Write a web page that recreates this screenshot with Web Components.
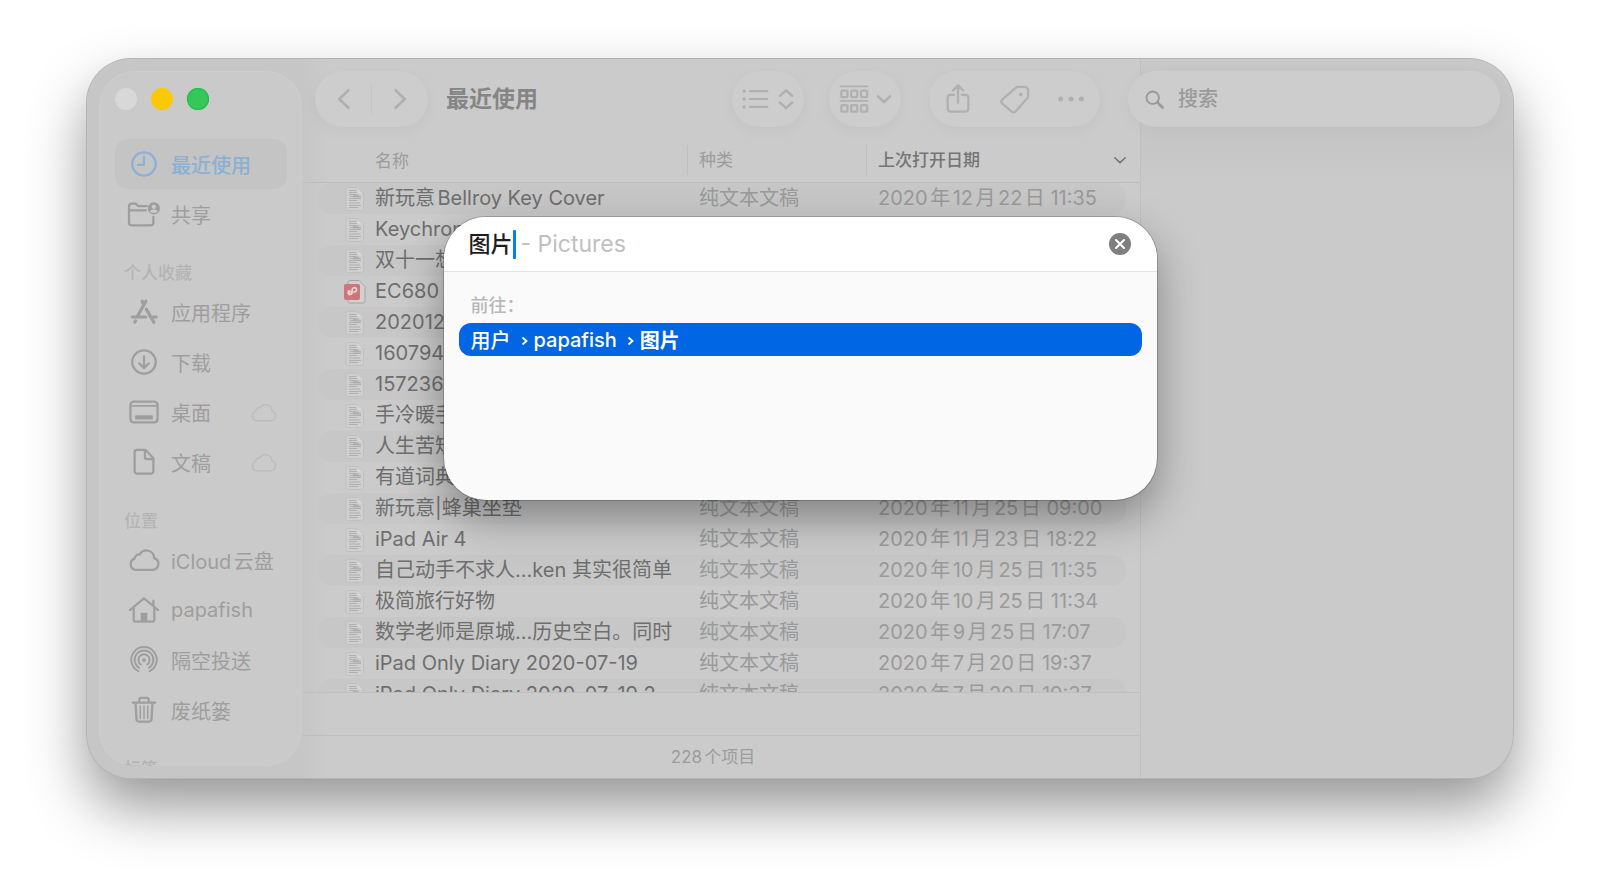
<!DOCTYPE html>
<html lang="zh-CN">
<head>
<meta charset="utf-8">
<title>最近使用</title>
<style>
  html, body { height: 100%; margin: 0; }
  body {
    box-sizing: border-box;
    padding: 59px 87px 115px 87px;
    background: #fff;
    font-family: Inter, "Noto Sans CJK SC", sans-serif;
    font-size: 20px;
    color: #707070;
    overflow: hidden;
    text-autospace: normal;
  }
</style>
</head>
<body>
<finder-window>
  <finder-sidebar slot="sidebar">
    <side-item icon="clock" selected>最近使用</side-item>
    <side-item icon="shared">共享</side-item>
    <side-heading>个人收藏</side-heading>
    <side-item icon="apps">应用程序</side-item>
    <side-item icon="download">下载</side-item>
    <side-item icon="desktop" cloud>桌面</side-item>
    <side-item icon="doc" cloud>文稿</side-item>
    <side-heading>位置</side-heading>
    <side-item icon="cloud">iCloud云盘</side-item>
    <side-item icon="home">papafish</side-item>
    <side-item icon="airdrop">隔空投送</side-item>
    <side-item icon="trash">废纸篓</side-item>
    <side-heading>标签</side-heading>
  </finder-sidebar>
  <finder-toolbar slot="toolbar">最近使用</finder-toolbar>
  <file-list slot="list"></file-list>
  <goto-sheet slot="sheet"></goto-sheet>
</finder-window>

<script>
const ICONS = {
  clock: '<circle cx="16" cy="16" r="12.500"/><path d="M16 8v9H9.500"/>',
  shared: '<path d="M26 19v6a3 3 0 0 1-3 3H3a3 3 0 0 1-3-3V8a3 3 0 0 1 3-3h4l3 2.500h9M1 12h17"/><path fill="currentColor" stroke="none" fill-rule="evenodd" d="M26.500 3.500a6.500 6.500 0 1 1 0 13 6.500 6.500 0 0 1 0-13zm0 2.500a2.300 2.300 0 1 0 0 4.600 2.300 2.300 0 0 0 0-4.600zm-4 7.200c1 1.200 2.400 1.500 4 1.500s3-.3 4-1.500c-.6-1.200-2-1.900-4-1.900s-3.400.7-4 1.900z"/>',
  apps: '<g stroke-width="3.400"><path d="M18 4.500 9 20.500M14 4.500 16 8.500M18.500 13l8 14M3.500 21.300h14.500M23 21.300h6M7 25.500l-.7 1.200"/></g>',
  download: '<circle cx="16" cy="16" r="12.500"/><path d="M16 10v12M11 17.500l5 5 5-5"/>',
  desktop: '<rect x="1.500" y="5" width="29" height="22" rx="3.500"/><path d="M2 9.500h28" stroke-width="1.800"/><rect x="6.500" y="19.500" width="19" height="4.500" rx="1" fill="currentColor" stroke="none"/>',
  doc: '<path d="M8.500 3h9l8.500 9V26a2.500 2.500 0 0 1-2.500 2.500h-15A2.500 2.500 0 0 1 6 26V5.500A2.500 2.500 0 0 1 8.500 3zM17 3.500V11a2 2 0 0 0 2 2h7"/>',
  cloud: '<path d="M7 26.500a6.200 6.200 0 0 1-1-12 5.200 5.200 0 0 1 5.500-4.500 8.200 8.200 0 0 1 15.300 4A6.400 6.400 0 0 1 25.500 26.500z"/>',
  home: '<path d="M1 16 16 3.500 31 16M5 14v12.500a2 2 0 0 0 2 2h18a2 2 0 0 0 2-2V14M26 10.500V6"/><rect x="12.500" y="19" width="7" height="9" fill="currentColor" stroke="none"/>',
  airdrop: '<g stroke-width="2"><circle cx="16" cy="16" r="2" fill="currentColor" stroke="none"/><path d="M10 28a13.600 13.600 0 1 1 12 0M10.600 24.300a10 10 0 1 1 10.800 0M12.500 20.800a6 6 0 1 1 7 0"/></g>',
  trash: '<path d="M4 8h24M11 8V5a2 2 0 0 1 2-2h6a2 2 0 0 1 2 2v3M7 8l1 18a2.500 2.500 0 0 0 2.500 2.500h11A2.500 2.500 0 0 0 24 26l1-18"/><path d="M12 12v13M16 12v13M20 12v13" stroke-width="1.600"/>',
  back: '<path d="M21 6 10.500 16 21 26"/>',
  forward: '<path d="M11 6l10.500 10L11 26"/>',
  share: '<path d="M12 11.500H8a3 3 0 0 0-3 3v12a3 3 0 0 0 3 3h16a3 3 0 0 0 3-3v-12a3 3 0 0 0-3-3h-4M16 20V2M10.500 7 16 1.500 21.500 7"/>',
  tag: '<path d="M18 3h8a4 4 0 0 1 4 4v7L16.500 29.500q-2 1.500-4 0L2 20.500q-1.300-1.500 0-3.500z"/><circle cx="22" cy="11" r="2" fill="currentColor" stroke="none"/>',
  more: '<g fill="currentColor" stroke="none"><circle cx="4" cy="16" r="2.700"/><circle cx="15" cy="16" r="2.700"/><circle cx="26" cy="16" r="2.700"/></g>',
  list: '<path d="M9 7h20M9 16h20M9 25h20"/><g fill="currentColor" stroke="none"><circle cx="2.500" cy="7" r="1.900"/><circle cx="2.500" cy="16" r="1.900"/><circle cx="2.500" cy="25" r="1.900"/></g>',
  updown: '<path d="M9 12.500 16 6l7 6.500M9 20l7 6.500 7-6.500" stroke-width="2.800"/>',
  group: '<path d="M1.500 2.500h29M1.500 18h29" stroke-width="1.800"/><rect x="2.500" y="7" width="6.500" height="7" rx="1"/><rect x="13" y="7" width="6.500" height="7" rx="1"/><rect x="23.500" y="7" width="6.500" height="7" rx="1"/><rect x="2.500" y="22.500" width="6.500" height="7" rx="1"/><rect x="13" y="22.500" width="6.500" height="7" rx="1"/><rect x="23.500" y="22.500" width="6.500" height="7" rx="1"/>',
  chevron: '<path d="M2 10 16 23l14-13"/>',
  search: '<circle cx="13" cy="13" r="10.500"/><path d="m21 21 8.500 8.500" stroke-width="4.500"/>',
};

const make = (name, html) => customElements.define(name, class extends HTMLElement {
  connectedCallback() {
    if (this.shadowRoot) return;
    const t = document.createElement('template');
    t.innerHTML = typeof html === 'function' ? html(this) : html;
    this.attachShadow({ mode: 'open' }).append(t.content.cloneNode(true));
  }
});

make('ui-icon', el => `
  <style>
    :host { display: block; flex: none; width: 30px; height: 30px; }
    svg { display: block; width: 100%; height: 100%; fill: none; stroke: currentColor;
          stroke-width: var(--stroke, 2.4); stroke-linecap: round; stroke-linejoin: round; overflow: visible; }
  </style>
  <svg viewBox="0 0 32 32" aria-hidden="true">${ICONS[el.getAttribute('name')]}</svg>`);

make('finder-window', `
  <style>
    :host {
      display: grid; position: relative; height: 100%; box-sizing: border-box;
      grid-template: 74px minmax(0, 1fr) / 215px minmax(0, 1fr) 373px;
      background: #cbcbcb; border-radius: 44px;
      box-shadow: 0 0 0 1px #b4b4b4, 0 29px 58px rgba(0,0,0,.42);
    }
    .side { grid-area: 1 / 1 / 3 / 2; min-height: 0; padding: 12px 0 12px 12px; background: #c6c6c6;
            border-radius: 44px 0 0 44px; }
    .preview { grid-area: 1 / 3 / 3 / 4; background: linear-gradient(#c8c8c8, #c6c6c6 90px, #cacaca 130px); border-left: 1px solid #c0c0c0;
               border-radius: 0 44px 44px 0; }
    .bar { grid-area: 1 / 2 / 2 / 4; z-index: 1; }
    .back { grid-area: 1 / 2 / 3 / 3; background: linear-gradient(90deg, #c6c6c6, #cbcbcb 30px); }
    .main { grid-area: 2 / 2 / 3 / 3; min-height: 0; }
    .sheet { position: absolute; top: 158px; left: 0; right: 0; margin: 0 auto; width: 50%; z-index: 2; }
  </style>
  <div class="side"><slot name="sidebar"></slot></div>
  <div class="back"></div>
  <div class="preview"></div>
  <div class="bar"><slot name="toolbar"></slot></div>
  <div class="main"><slot name="list"></slot></div>
  <div class="sheet"><slot name="sheet"></slot></div>`);

make('finder-sidebar', `
  <style>
    :host { display: flex; flex-direction: column; height: 100%; box-sizing: border-box; overflow: hidden;
            padding: 17px 15px 0 16px; border-radius: 36px; background: #cacaca;
            box-shadow: inset 0 0 0 1px #cdcdcd; }
    .lights { display: flex; flex: none; gap: 14px; height: 51px; }
    button { width: 22px; height: 22px; padding: 0; border: 0; border-radius: 50%; background: #d8d8d8; }
    .min { background: #fbc804; }
    .max { background: #34c759; box-shadow: inset 0 0 0 1px #1fbf45; }
    nav { flex: 1; min-height: 0; }
  </style>
  <div class="lights">
    <button aria-label="关闭"></button><button class="min" aria-label="最小化"></button><button class="max" aria-label="缩放"></button>
  </div>
  <nav><slot></slot></nav>`);

make('side-item', el => `
  <style>
    :host { display: block; color: #9e9e9e; }
    a { display: flex; align-items: center; gap: 12px; height: 50px; padding: 0 11px 0 14px; border-radius: 13px;
        color: inherit; text-decoration: none; white-space: nowrap; }
    :host([selected]) a { background: #c4c4c4; color: #8bb0d4; font-weight: 500; }
    .cloud { width: 25px; height: 25px; margin-left: auto; color: #bcbcbc; --stroke: 1.8; }
  </style>
  <a href="#"><ui-icon name="${el.getAttribute('icon')}"></ui-icon><slot></slot>${
    el.hasAttribute('cloud') ? '<ui-icon class="cloud" name="cloud"></ui-icon>' : ''}</a>`);

make('side-heading', `
  <style>
    :host { display: block; box-sizing: border-box; height: 48px; padding: 20px 9px 0; line-height: 28px;
            font-size: 17px; font-weight: 500; color: #b4b4b4; }
  </style><slot></slot>`);

make('finder-toolbar', `
  <style>
    :host { display: flex; align-items: center; height: 56px; padding: 12px 13px 0; color: #b0b0b0; }
    .pill { display: flex; align-items: center; box-sizing: border-box; height: 56px; border-radius: 28px;
            background: #cdcdcd; box-shadow: 0 4px 16px rgba(0,0,0,.04); }
    button { display: flex; align-items: center; justify-content: center; flex: 1; height: 100%; padding: 0;
             border: 0; background: none; color: inherit; gap: 8px; }
    .nav { width: 113px; padding: 0 1px; --stroke: 3; }
    .nav i { width: 1px; height: 30px; background: #c4c4c4; }
    .nav ui-icon { width: 28px; height: 28px; }
    h1 { margin: 0 auto 0 18px; font-size: 23px; line-height: 32px; font-weight: 700; color: #858585; white-space: nowrap; }
    .views { display: flex; gap: 25px; margin-right: 28px; }
    .views .pill { width: 72px; }
    .lines { width: 28px; height: 28px; }
    .updown { width: 28px; height: 28px; margin: 0 -6px; }
    .drop { width: 14px; height: 14px; --stroke: 6; }
    .actions { width: 171px; margin-right: 28px; }
    .search { width: 372px; padding: 0 17px; gap: 14px; color: #9a9a9a; }
    .lens { width: 19px; height: 19px; --stroke: 3.2; }
    input { flex: 1; min-width: 0; padding: 0; border: 0; outline: 0; background: none; font: inherit; font-weight: 500; color: inherit; }
    input::placeholder { color: #9a9a9a; opacity: 1; }
  </style>
  <div class="pill nav">
    <button aria-label="后退"><ui-icon name="back"></ui-icon></button><i></i>
    <button aria-label="前进"><ui-icon name="forward"></ui-icon></button>
  </div>
  <h1><slot></slot></h1>
  <div class="views">
    <div class="pill"><button aria-label="显示"><ui-icon class="lines" name="list"></ui-icon><ui-icon class="updown" name="updown"></ui-icon></button></div>
    <div class="pill"><button aria-label="群组"><ui-icon name="group"></ui-icon><ui-icon class="drop" name="chevron"></ui-icon></button></div>
  </div>
  <div class="pill actions">
    <button aria-label="共享"><ui-icon name="share"></ui-icon></button>
    <button aria-label="标签"><ui-icon name="tag"></ui-icon></button>
    <button aria-label="更多"><ui-icon name="more"></ui-icon></button>
  </div>
  <label class="pill search"><ui-icon class="lens" name="search"></ui-icon><input type="text" placeholder="搜索" aria-label="搜索"></label>`);

make('file-icon', el => `
  <style>
    :host { display: block; flex: none; width: 22px; height: 26px; }
    svg { display: block; overflow: visible; }
  </style>` + (el.hasAttribute('pdf') ? `
  <svg width="22" height="26" viewBox="0 0 22 26" aria-hidden="true">
    <path d="M6 1.500h9l6 6V22a2 2 0 0 1-2 2H6a2 2 0 0 1-2-2V3.500a2 2 0 0 1 2-2z" fill="#d0d0d0" stroke="#a4a4a4"/>
    <rect x="0" y="5" width="16" height="16" rx="2" fill="#cf7478"/>
    <path d="M5.500 16.500V13h4.800a2.200 2.200 0 1 0-2.200-2.200v2.700a2 2 0 1 1-2-2" fill="none" stroke="#e6d4d4" stroke-width="1.600"/>
  </svg>` : `
  <svg width="22" height="26" viewBox="0 0 22 26" aria-hidden="true">
    <path d="M4 1.500h9l6.500 6.500v14.500a2 2 0 0 1-2 2H4a2 2 0 0 1-2-2v-19a2 2 0 0 1 2-2z" fill="#cfcfcf" stroke="#c0c0c0"/>
    <path d="M5 4.500h7M5 6.500h8M5 8.500h7M6 10.500h11M5 12.500h12M5 14.500h8M5 17h11M5 19.500h12M5 21.500h9" stroke="#b0b0b0" stroke-width="1"/>
    <path d="M9 8.500h5l3 3h-8z" fill="#b0b0b0"/>
    <path d="M13 1.500V7a1 1 0 0 0 1 1h5.500z" fill="#d8d8d8" stroke="#c2c2c2" stroke-width=".6"/>
  </svg>`));

const FILES = [
  ['新玩意Bellroy Key Cover', '2020年12月22日 11:35'],
  ['Keychron'], ['双十一想'], ['EC680', '', 'pdf'], ['202012'], ['160794'], ['157236'],
  ['手冷暖手'], ['人生苦短'], ['有道词典'],
  ['新玩意|蜂巢坐垫', '2020年11月25日 09:00'],
  ['iPad Air 4', '2020年11月23日 18:22'],
  ['自己动手不求人…ken 其实很简单', '2020年10月25日 11:35'],
  ['极简旅行好物', '2020年10月25日 11:34'],
  ['数学老师是原城…历史空白。同时', '2020年9月25日 17:07'],
  ['iPad Only Diary 2020-07-19', '2020年7月20日 19:37'],
  ['iPad Only Diary 2020-07-19 2', '2020年7月20日 19:37'],
];

make('file-list', `
  <style>
    :host { display: flex; flex-direction: column; height: 100%; }
    .scroll { flex: 1; min-height: 0; overflow: hidden; padding: 0 14px 0 16px;
              background: linear-gradient(#bdbdbd, #bdbdbd) 0 49px / 100% 1px no-repeat; }
    table { width: 100%; table-layout: fixed; border-collapse: separate; border-spacing: 0; }
    th, td { padding: 0; text-align: left; white-space: nowrap; overflow: hidden; font-weight: 400; }
    th { height: 47px; padding-top: 3px; font-size: 17px; color: #9c9c9c; }
    th:first-child { padding-left: 57px; }
    th + th div { padding-left: 11px; border-left: 1px solid #bfbfbf; height: 30px; line-height: 30px; }
    .date div { display: flex; align-items: center; justify-content: space-between; font-weight: 500; color: #757575; }
    .date ui-icon { width: 12px; height: 12px; --stroke: 4; }
    .kind { width: 179px; } .date { width: 260px; }
    td { height: 31px; line-height: 31px; color: #9a9a9a; }
    td + td { padding-left: 12px; }
    td:first-child { padding-left: 26px; color: #6e6e6e; border-radius: 14px 0 0 14px; }
    td:last-child { border-radius: 0 14px 14px 0; }
    tbody tr:nth-child(odd) td { background: #c7c7c7; }
    .name { display: flex; align-items: center; gap: 9px; height: 31px; }
    .path, .status { flex: none; box-sizing: border-box; border-top: 1px solid #bfbfbf; }
    .path { height: 43px; }
    .status { height: 43px; line-height: 42px; padding-right: 16px; text-align: center; font-size: 17px; color: #9c9c9c; }
  </style>
  <div class="scroll"><table>
    <thead><tr><th scope="col">名称</th><th scope="col" class="kind"><div>种类</div></th>
      <th scope="col" class="date"><div>上次打开日期<ui-icon name="chevron"></ui-icon></div></th></tr></thead>
    <tbody>${FILES.map(([n, d, p]) => `<tr><td><div class="name"><file-icon ${p || ''}></file-icon><span>${n}</span></div></td><td>${d ? '纯文本文稿' : ''}</td><td>${d || ''}</td></tr>`).join('')}</tbody>
  </table></div>
  <div class="path"></div>
  <div class="status">228个项目</div>`);

make('goto-sheet', `
  <style>
    :host { display: block; border-radius: 42px; background: #fafafa; overflow: hidden; min-height: 283px;
            box-shadow: 0 0 0 1px rgba(0,0,0,.2), 0 18px 44px rgba(0,0,0,.34); }
    .field { display: flex; align-items: center; height: 54px; padding: 0 26px 0 25px; background: #fff; border-bottom: 1px solid #e2e2e2; }
    input { width: 44px; height: 30px; padding: 0; border: 0; outline: 0; background: none; font: inherit; font-size: 22px; line-height: 30px; font-weight: 500; color: #1d1d1f; }
    .caret { width: 3px; height: 29px; border-radius: 1px; background: #0a7aff; }
    .hint { margin: 0 auto 0 5px; font-size: 23px; line-height: 32px; color: #c0c0c0; }
    button { width: 22px; height: 22px; padding: 0; border: 0; border-radius: 50%; background: #7f7f7f; }
    button svg { display: block; }
    .body { padding: 20px 15px; }
    h2 { margin: 0 0 3px 12px; font-size: 18px; line-height: 28px; font-weight: 500; color: #b8b8b8; }
    a { display: flex; align-items: center; height: 33px; padding: 0 12px; border-radius: 12px; background: #0066e4;
        color: #fff; font-weight: 500; text-decoration: none; }
    a svg { margin: 2px 6px 0 10px; }
    strong { font-weight: 700; }
  </style>
  <div class="field">
    <input type="text" value="图片" aria-label="前往文件夹"><span class="caret"></span><span class="hint">- Pictures</span>
    <button aria-label="清除"><svg width="22" height="22" viewBox="0 0 22 22"><path d="m7 7 8 8M15 7l-8 8" stroke="#fff" stroke-width="2" stroke-linecap="round"/></svg></button>
  </div>
  <div class="body">
    <h2>前往：</h2>
    <a href="#"><span>用户</span><svg width="7" height="10" viewBox="0 0 7 10"><path d="m1.500 1.500 4 3.500-4 3.500" fill="none" stroke="#fff" stroke-width="1.800"/></svg><span>papafish</span><svg width="7" height="10" viewBox="0 0 7 10"><path d="m1.500 1.500 4 3.500-4 3.500" fill="none" stroke="#fff" stroke-width="1.800"/></svg><strong>图片</strong></a>
  </div>`);
</script>
</body>
</html>
